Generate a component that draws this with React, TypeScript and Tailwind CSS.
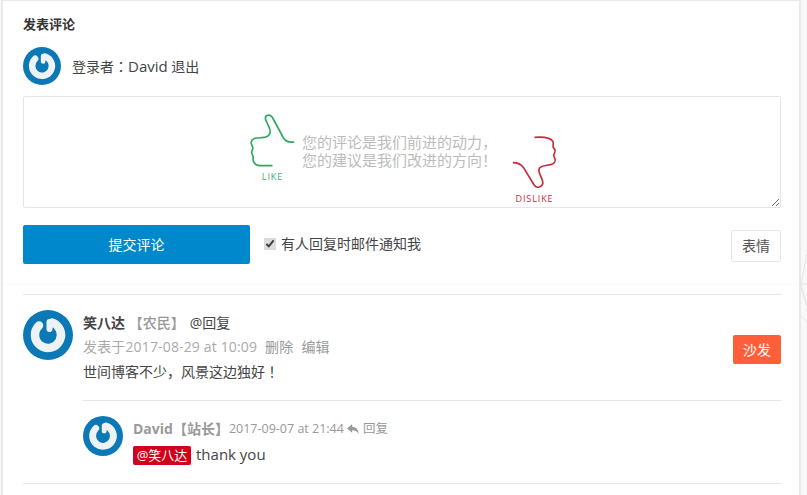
function Avatar({ className }: { className: string }) {
  return (
    <svg viewBox="0 0 50 50" className={className}>
      <circle cx="25" cy="25" r="25" fill="#0c78b6" />
      <path d="M16 15.5a13 13 0 1 0 13 -3" fill="none" stroke="#edf2f5" strokeWidth="8.5" strokeLinecap="round" />
      <path d="M26.5 12v7" stroke="#edf2f5" strokeWidth="6" strokeLinecap="round" />
    </svg>
  );
}

function ThumbUp() {
  return (
    <svg viewBox="55 50 140 165" className="w-[47px] h-[55px]" fill="none">
      <path
        d="M190 137c-15 2-25-1-32-12L124 62c-8-10-22-6-20 6 2 12 16 26 14 40-2 12-12 15-25 16-15 1-30 0-32 14-1 8 6 12 5 18-1 7-5 8-3 15 1 6 6 7 4 14-2 9 4 22 18 23h40"
        stroke="#2fa85f"
        strokeWidth="5"
      />
    </svg>
  );
}

function ThumbDown() {
  return (
    <svg viewBox="840 118 140 165" className="w-[47px] h-[55px]" fill="none">
      <path
        d="M910 125c25-2 48 0 55 12 4 7-2 14 2 19 4 6 8 7 4 14-3 5-6 8-2 14 4 7 6 12-2 19-10 8-38 4-43 16-5 14 12 28 11 43-1 12-18 18-26 6l-32-52c-7-10-17-15-32-15"
        stroke="#c9293c"
        strokeWidth="5"
      />
    </svg>
  );
}

export default function App() {
  return (
    <div className="flex w-[807px] h-[495px] overflow-hidden bg-[#f8f8f8] pl-px text-[#444] text-sm font-['Open_Sans','Noto_Sans_CJK_SC',sans-serif]">
      <div className="w-[800px] h-[495px] shrink-0 bg-white border-x-2 border-t border-[#e9e9e9] pl-5 pr-[18px]">
        <section className="h-[284px] -ml-5 -mr-[18px] pl-5 pr-[18px] border-b border-[#fafafa]">
          <h3 className="pt-[13px] h-[37px] font-bold text-[13px] leading-5 text-[#333]">发表评论</h3>
          <div className="flex items-center gap-[11px] mt-[9px] h-[38px]">
            <Avatar className="w-[38px] h-[38px]" />
            <span className="mt-[2px]">
              登录者<span className="font-['Noto_Sans_CJK_TC']">：</span>
              <span className="text-[15px]">David</span> 退出
            </span>
          </div>
          <div className="relative mt-[11px]">
            <textarea
              readOnly
              className="block w-[758px] h-[112px] rounded-[2px] border border-[#e6e6e6] outline-none"
            />
            <div className="absolute left-[226px] top-[17px] flex items-start pointer-events-none">
              <div className="flex flex-col items-center w-[47px]">
                <ThumbUp />
                <span className="text-[9px] leading-3 text-[#3fae6c] tracking-[0.1em] mt-[3px]">LIKE</span>
              </div>
              <p className="mt-[20px] ml-[6px] text-[15px] leading-[18px] text-[#bcbcbc] whitespace-nowrap">
                您的评论是我们前进的动力，
                <br />
                您的建议是我们改进的方向！
              </p>
              <div className="flex flex-col items-center w-[47px] mt-[22px] ml-[14px]">
                <ThumbDown />
                <span className="text-[9px] leading-3 text-[#c9293c] tracking-[0.1em] mt-[3px]">DISLIKE</span>
              </div>
            </div>
          </div>
          <div className="flex items-start mt-[17px] h-[39px]">
            <button className="w-[227px] h-[39px] rounded-[2px] bg-[#0088cc] text-white">提交评论</button>
            <label className="flex items-center ml-[14px] mt-[9px]">
              <input type="checkbox" defaultChecked className="w-3 h-3 mr-[5px] accent-[#dcdcdc]" />
              有人回复时邮件通知我
            </label>
            <button className="ml-auto mt-[5px] w-[50px] h-[32px] rounded-[2px] border border-[#e6e6e6] bg-white text-[#555]">
              表情
            </button>
          </div>
        </section>
        <section className="mt-[9px] border-t border-[#e6e6e6]">
          <div className="flex mt-[15px]">
            <Avatar className="w-[50px] h-[50px] shrink-0" />
            <div className="flex-1 ml-[10px] min-w-0">
              <div className="leading-5 mt-[3px]">
                <span className="font-bold text-[#444]">笑八达</span>
                <span className="font-medium text-[#999]"> 【农民】</span>
                <span className="ml-[5px]">@回复</span>
              </div>
              <div className="flex items-start justify-between h-[29px] mt-[2px]">
                <p className="mt-[2px] text-[#aaa] tracking-[0.15px]">
                  发表于2017-08-29 at 10:09
                  <span className="ml-2 text-[#999]">删除</span>
                  <span className="ml-2 text-[#999]">编辑</span>
                </p>
                <div className="w-[48px] h-[29px] rounded-[2px] bg-[#ff5e3a] text-white text-center leading-[29px]">
                  沙发
                </div>
              </div>
              <p className="leading-5 mt-[-3px] text-[#444]">
                世间博客不少，风景这边独好<span className="font-['Noto_Sans_CJK_TC']">！</span>
              </p>
              <div className="border-t border-[#e6e6e6] mt-[18px] pt-[15px] flex">
                <Avatar className="w-[40px] h-[40px] shrink-0" />
                <div className="ml-[10px]">
                  <div className="flex items-center leading-5 mt-[3px] text-[#999] whitespace-nowrap">
                    <span className="font-bold">David【站长】</span>
                    <span className="text-[12.5px]">2017-09-07 at 21:44</span>
                    <svg viewBox="0 0 14 12" className="w-[13px] h-[11px] mx-[3px]" fill="#999">
                      <path d="M5.5 0 0 4.8l5.5 4.7V6.7c3.2 0 5.6.8 7.2 4.3C12.5 6.4 10 3.2 5.5 2.9z" />
                    </svg>
                    <span className="text-[12.5px]">回复</span>
                  </div>
                  <div className="flex items-center mt-[5px]">
                    <span className="w-[58px] h-[19px] rounded-[2px] bg-[#d0021b] text-white text-[13px] leading-[19px] text-center">
                      @笑八达
                    </span>
                    <span className="ml-[5px] mb-[2px] text-[15px] leading-5">thank you</span>
                  </div>
                </div>
              </div>
            </div>
          </div>
          <div className="border-t border-[#e6e6e6] mt-[17px]" />
        </section>
      </div>
      <svg viewBox="0 0 6 120" className="w-[6px] h-[120px] mt-[238px] shrink-0" fill="none" stroke="#dcdcdc" strokeWidth="0.7">
        <path d="M0 46 6 16M0 46h6M0 46l6 22M0 50l6 18M0 78l6 6" />
      </svg>
    </div>
  );
}
